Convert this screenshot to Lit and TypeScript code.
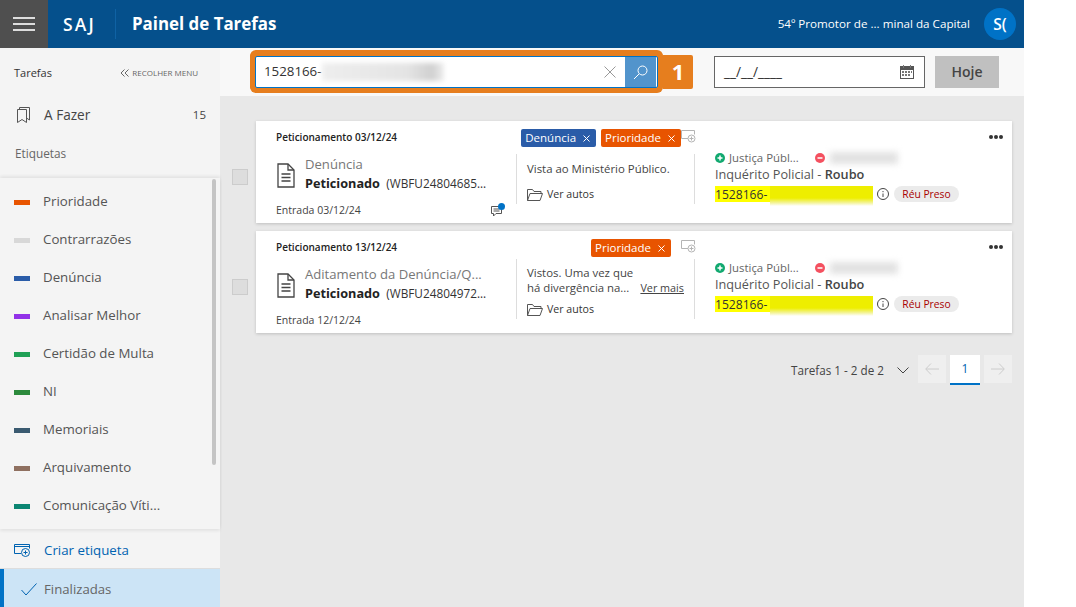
import { LitElement, html, css, svg } from 'lit';
import { customElement } from 'lit/decorators.js';

const labels = [
  ['Prioridade', '#e85400'],
  ['Contrarrazões', '#d8d8d8'],
  ['Denúncia', '#2a5ca8'],
  ['Analisar Melhor', '#9232e8'],
  ['Certidão de Multa', '#1fa055'],
  ['NI', '#2c8a3c'],
  ['Memoriais', '#3a5a70'],
  ['Arquivamento', '#8f7060'],
  ['Comunicação Víti...', '#0b8572'],
];

const tasks = [
  {
    title: 'Peticionamento 03/12/24',
    tags: [['Denúncia', '#2a5ca8'], ['Prioridade', '#e85400']],
    type: 'Denúncia',
    code: '(WBFU24804685...',
    entry: 'Entrada 03/12/24',
    note: ['Vista ao Ministério Público.'],
    comment: true,
  },
  {
    title: 'Peticionamento 13/12/24',
    tags: [['Prioridade', '#e85400']],
    type: 'Aditamento da Denúncia/Q...',
    code: '(WBFU24804972...',
    entry: 'Entrada 12/12/24',
    note: ['Vistos. Uma vez que', 'há divergência na...'],
    comment: false,
  },
];

const docIcon = svg`<svg width="18" height="25" viewBox="0 0 18 25" fill="none" stroke="#444" stroke-width="1.3"><path d="M1 1h10l6 6v17H1z"/><path d="M11 1v6h6M4.5 11h9M4.5 14.5h9M4.5 18h9"/></svg>`;
const folderIcon = svg`<svg width="16" height="13" viewBox="0 0 16 13" fill="none" stroke="#555"><path d="M.5 12.500V1.500h5l1.500 2h7v2M.5 12.500l2.500-7h12.500l-2.500 7z"/></svg>`;
const tagAddIcon = svg`<svg width="15" height="13" viewBox="0 0 15 13" fill="none" stroke="#b4b4b4"><path d="M7 8.500H.5V.5h13v4"/><circle cx="10.500" cy="8.500" r="3.500"/><path d="M8.500 8.500h4M10.500 6.500v4"/></svg>`;
const closeIcon = svg`<svg width="7" height="7" viewBox="0 0 7 7" stroke="currentColor"><path d="M.5.500l6 6M6.500.500l-6 6"/></svg>`;

@customElement('app-root')
export class AppRoot extends LitElement {
  static styles = css`
    :host {
      display: block;
      width: 1076px;
      height: 607px;
      overflow: hidden;
      background: #fff;
      font: 13px/1.2 'Open Sans', 'Noto Sans', sans-serif;
      color: #333;
    }

    .app { width: 1024px; height: 607px; display: flex; flex-direction: column; }

    /* header */
    .top { height: 48px; flex: none; background: #05508c; color: #fff; display: flex; align-items: center; }
    .burger { width: 48px; height: 48px; background: #4f4f4f; display: flex; flex-direction: column; justify-content: center; align-items: center; gap: 4px; }
    .burger i { display: block; width: 22px; height: 2px; background: #ddd; }
    .saj { margin-left: 15px; width: 52px; font-size: 17.500px; font-weight: 600; letter-spacing: 2.200px; }
    .sep { width: 1px; height: 30px; background: #0f62a4; }
    .appname { margin-left: 16px; font-size: 16.900px; font-weight: 700; }
    .who { margin-left: auto; font-size: 11.650px; }
    .avatar { width: 32px; height: 32px; border-radius: 50%; background: #0072c6; margin: 0 8px 0 14px; display: flex; align-items: center; justify-content: center; font-size: 15.500px; font-weight: 600; }

    .below { flex: 1; display: flex; min-height: 0; }

    /* sidebar */
    .side { width: 220px; flex: none; background: #f4f4f4; display: flex; flex-direction: column; }
    .side-head { height: 50px; padding: 0 22px 0 14px; display: flex; align-items: center; justify-content: space-between; }
    .side-head b { font-weight: 400; font-size: 11px; color: #333; }
    .collapse { display: flex; align-items: center; gap: 3px; font-size: 8px; color: #666; }
    .afazer { height: 34px; padding: 0 14px 0 17px; display: flex; align-items: center; font-size: 13.600px; color: #444; font-weight: 500; }
    .afazer span { margin-left: 14px; }
    .afazer em { margin-left: auto; font-style: normal; font-size: 11.500px; }
    .etq { padding: 14px 0 0 15px; height: 29px; font-size: 11.800px; color: #666; }
    .labels { position: relative; flex: 1; min-height: 0; overflow: hidden; box-shadow: 0 -2px 3px rgba(0, 0, 0, 0.07), 0 2px 3px rgba(0, 0, 0, 0.07); margin-top: 3px; margin-bottom: 2px; padding-top: 5px; }
    .label { height: 38px; padding-left: 14px; display: flex; align-items: center; gap: 13px; font-size: 13.300px; color: #555; }
    .label i { display: block; width: 16px; height: 5px; }
    .thumb { position: absolute; left: 212px; top: 1px; width: 4px; height: 286px; background: #c4c4c4; border-radius: 2px; }
    .create { height: 38px; flex: none; padding: 2px 0 0 14px; display: flex; align-items: center; gap: 14px; color: #0063b1; font-size: 13.300px; border-bottom: 1px solid #ddd; box-sizing: border-box; }
    .done { height: 38px; flex: none; box-sizing: border-box; background: #cce4f6; border-left: 4px solid #0072c6; padding: 3px 0 0 17px; display: flex; align-items: center; gap: 7px; color: #666; font-size: 13.200px; }

    /* main */
    .main { flex: 1; background: #e8e8e8; display: flex; flex-direction: column; min-width: 0; }
    .bar { height: 48px; flex: none; background: #f8f8f8; display: flex; align-items: center; padding-left: 35px; position: relative; }
    .search { width: 403px; height: 32px; box-sizing: border-box; border: 1px solid #0072c6; background: #fff; display: flex; align-items: center; position: relative; box-shadow: 0 0 0 5px #e67e1e, 0 -1px 0 5px #e67e1e; border-radius: 2px; }
    .search .num { margin-left: 8px; font-size: 13.300px; color: #333; }
    .smear { width: 122px; height: 18px; background: linear-gradient(90deg, #eee, #e4e4e4 70%, #d0d0d0 90%, #eee); filter: blur(2.500px); }
    .clear { margin-left: auto; margin-right: 9px; color: #888; display: flex; }
    .go { width: 31px; height: 30px; margin-right: 1px; background: #5294cc; display: flex; align-items: center; justify-content: center; }
    .one { width: 30px; height: 34px; margin: -1px 0 0 5px; background: #e67e1e; color: #fff; font-size: 22px; font-weight: 700; display: flex; align-items: center; justify-content: center; border-radius: 0 2px 2px 0; }
    .date { margin-left: 21px; width: 211px; height: 32px; box-sizing: border-box; border: 1px solid #666; background: #fff; display: flex; align-items: center; justify-content: space-between; padding: 0 10px 0 9px; font-size: 13.700px; color: #333; }
    .today { margin-left: 10px; width: 64px; height: 32px; background: #c0c0c0; display: flex; align-items: center; justify-content: center; font-size: 14px; font-weight: 600; color: #444; }

    .list { padding: 25px 12px 0 12px; display: flex; flex-direction: column; gap: 8px; }
    .row { display: flex; align-items: center; gap: 8px; }
    .check { width: 16px; height: 16px; flex: none; margin-top: 10px; background: #ddd; border: 1px solid #ccc; box-sizing: border-box; }
    .card { flex: 1; height: 102px; background: #fff; box-shadow: 0 1px 3px rgba(0, 0, 0, 0.18); display: flex; position: relative; }

    .c1 { width: 260px; box-sizing: border-box; padding: 9px 0 0 20px; position: relative; flex: none; }
    .title { font-size: 10px; font-weight: 600; line-height: 14px; color: #222; }
    .doc { display: flex; gap: 10px; margin-top: 11px; padding-left: 1px; height: 44px; }
    .doc svg { margin-top: 8px; flex: none; }
    .type { font-size: 13.100px; line-height: 19px; color: #777; white-space: nowrap; }
    .state { font-size: 12.700px; line-height: 19px; font-weight: 700; color: #222; white-space: nowrap; }
    .state small { font-size: 11.800px; font-weight: 400; margin-left: 3px; color: #333; }
    .entry { margin-top: 4px; font-size: 10.500px; line-height: 14px; color: #444; }
    .comment { position: absolute; left: 235px; top: 82px; }

    .c2 { width: 180px; flex: none; box-sizing: border-box; padding-top: 8px; display: flex; flex-direction: column; }
    .tags { display: flex; justify-content: flex-end; align-items: flex-start; height: 18px; margin-bottom: 4px; gap: 5px; }
    .tag { height: 18px; padding: 0 6px 0 4px; border-radius: 2px; color: #fff; display: flex; align-items: center; gap: 7px; font-size: 11.500px; }
    .tagadd { margin: 1px 0 0 -5px; display: flex; }
    .tags.spaced .tagadd { margin-left: 5px; }
    .descwrap { flex: 1; padding: 0 1px 16px 0; display: flex; align-items: center; min-height: 0; }
    .desc { flex: 1; border-left: 1px solid #ddd; border-right: 1px solid #ddd; padding: 6px 0 0 10px; font-size: 11.400px; line-height: 15px; color: #444; }
    .desc .line { display: flex; justify-content: space-between; padding-right: 10px; white-space: nowrap; }
    .desc u { font-size: 10.800px; }
    .autos { height: 20px; margin-top: 4.500px; display: flex; align-items: center; gap: 4px; font-size: 10.600px; color: #333; }
    .desc.single { padding-top: 7px; }
    .desc.single .autos { margin-top: 8px; }

    .c3 { flex: 1; padding: 30px 0 0 19px; position: relative; }
    .dots { position: absolute; right: 9px; top: 14px; display: flex; gap: 1px; }
    .dots i { display: block; width: 4px; height: 4px; border-radius: 50%; background: #333; }
    .party { display: flex; align-items: center; height: 14px; font-size: 11.400px; color: #666; }
    .party span { width: 86px; margin-left: 4px; white-space: nowrap; }
    .party .blur { width: 68px; height: 12px; margin-left: 5px; background: #e2e2e2; filter: blur(3px); }
    .kind { margin-top: 1px; line-height: 17px; font-size: 12.700px; color: #555; white-space: nowrap; }
    .kind b { font-weight: 600; color: #444; }
    .proc { margin-top: 3px; display: flex; align-items: flex-start; height: 20px; }
    .hl { width: 158px; height: 16px; display: flex; font-size: 12.100px; line-height: 17px; color: #333; }
    .hl span { background: #ffff00; width: 55px; box-sizing: border-box; }
    .hl i { display: block; flex: 1; height: 20px; background: linear-gradient(#eeee00 60%, #f4f4a0 85%, #fff); }
    .info { margin: 2px 5px 0 4px; display: flex; }
    .chip { height: 16px; width: 65px; border-radius: 8px; background: #ebebeb; color: #a80000; font-size: 10.300px; display: flex; align-items: center; justify-content: center; }

    .pager { margin-top: 22px; padding-right: 12px; display: flex; justify-content: flex-end; align-items: flex-start; height: 29px; }
    .pager .count { font-size: 11.700px; line-height: 29px; margin-top: 1px; color: #444; margin-right: 13px; }
    .pager .chev { margin: 12px 9px 0 0; display: flex; }
    .pbtn { width: 28px; height: 28px; background: #efefef; display: flex; align-items: center; justify-content: center; }
    .pnum { width: 30px; height: 27px; padding-top: 1px; box-sizing: content-box; margin: 0 4px; background: #fff; border-bottom: 2px solid #0072c6; display: flex; align-items: center; justify-content: center; font-size: 12px; color: #0063b1; }
  `;

  renderCard(t: (typeof tasks)[number]) {
    const spaced = t.tags.length === 1;
    return html`
      <div class="row">
        <div class="check"></div>
        <div class="card">
          <div class="c1">
            <div class="title">${t.title}</div>
            <div class="doc">
              ${docIcon}
              <div>
                <div class="type">${t.type}</div>
                <div class="state">Peticionado <small>${t.code}</small></div>
              </div>
            </div>
            <div class="entry">${t.entry}</div>
            ${t.comment
              ? html`<div class="comment">
                  <svg width="15" height="15" viewBox="0 0 15 15" fill="none" stroke="#555">
                    <path d="M.5 3.500h10v7H5l-2.500 2.500v-2.500h-2zM2.500 6h6M2.500 8h6" />
                    <circle cx="10.500" cy="3.500" r="3.500" fill="#0072c6" stroke="none" />
                  </svg>
                </div>`
              : ''}
          </div>
          <div class="c2">
            <div class="tags ${spaced ? 'spaced' : ''}">
              ${t.tags.map(
                ([name, color]) => html`<div class="tag" style="background:${color}">${name}${closeIcon}</div>`
              )}
              <div class="tagadd">${tagAddIcon}</div>
            </div>
            <div class="descwrap">
              <div class="desc ${t.note.length === 1 ? 'single' : ''}">
                ${t.note.length === 1
                  ? html`<div class="line">${t.note[0]}</div>`
                  : html`<div class="line">${t.note[0]}</div>
                      <div class="line">${t.note[1]} <u>Ver mais</u></div>`}
                <div class="autos">${folderIcon} Ver autos</div>
              </div>
            </div>
          </div>
          <div class="c3">
            <div class="dots"><i></i><i></i><i></i></div>
            <div class="party">
              <svg width="10" height="10" viewBox="0 0 10 10"><circle cx="5" cy="5" r="5" fill="#12a970" /><path d="M2.500 5h5M5 2.500v5" stroke="#fff" stroke-width="1.500" /></svg>
              <span>Justiça Públ...</span>
              <svg width="10" height="10" viewBox="0 0 10 10"><circle cx="5" cy="5" r="5" fill="#f4505f" /><path d="M2.500 5h5" stroke="#fff" stroke-width="1.500" /></svg>
              <div class="blur"></div>
            </div>
            <div class="kind">Inquérito Policial - <b>Roubo</b></div>
            <div class="proc">
              <div class="hl"><span>1528166-</span><i></i></div>
              <div class="info">
                <svg width="12" height="12" viewBox="0 0 12 12" fill="none" stroke="#444"><circle cx="6" cy="6" r="5.500" /><path d="M6 5.500V9M6 3v1.200" /></svg>
              </div>
              <div class="chip">Réu Preso</div>
            </div>
          </div>
        </div>
      </div>
    `;
  }

  render() {
    return html`
      <div class="app">
        <header class="top">
          <div class="burger"><i></i><i></i><i></i></div>
          <div class="saj">SAJ</div>
          <div class="sep"></div>
          <div class="appname">Painel de Tarefas</div>
          <div class="who">54º Promotor de ... minal da Capital</div>
          <div class="avatar">S(</div>
        </header>
        <div class="below">
          <nav class="side">
            <div class="side-head">
              <b>Tarefas</b>
              <div class="collapse">
                <svg width="9" height="8" viewBox="0 0 9 8" fill="none" stroke="#666"><path d="M4.500.500L1 4l3.500 3.500M8.500.500L5 4l3.500 3.500" /></svg>
                RECOLHER MENU
              </div>
            </div>
            <div class="afazer">
              <svg width="13" height="16" viewBox="0 0 13 16" fill="none" stroke="#555"><path d="M.5 2.500h9v13l-4.500-3-4.500 3zM2.500 2.500v-2h10v12.500l-3-2" /></svg>
              <span>A Fazer</span>
              <em>15</em>
            </div>
            <div class="etq">Etiquetas</div>
            <div class="labels">
              <div class="thumb"></div>
              ${labels.map(([name, color]) => html`<div class="label"><i style="background:${color}"></i>${name}</div>`)}
            </div>
            <div class="create">
              <svg width="16" height="13" viewBox="0 0 16 13" fill="none" stroke="#0063b1"><path d="M7 9.500H.5V.5h15v4M.5 2.500h15" /><circle cx="11.500" cy="8.500" r="4" /><path d="M9.500 8.500h4M11.500 6.500v4" /></svg>
              Criar etiqueta
            </div>
            <div class="done">
              <svg width="16" height="13" viewBox="0 0 16 13" fill="none" stroke="#0063b1"><path d="M.5 7l4.500 5L15.500 .5" /></svg>
              Finalizadas
            </div>
          </nav>
          <main class="main">
            <div class="bar">
              <div class="search">
                <span class="num">1528166-</span>
                <div class="smear"></div>
                <div class="clear">
                  <svg width="12" height="12" viewBox="0 0 12 12" stroke="#999"><path d="M.5.500l11 11M11.500.500l-11 11" /></svg>
                </div>
                <div class="go">
                  <svg width="15" height="15" viewBox="0 0 15 15" fill="none" stroke="#fff"><circle cx="9.500" cy="5.500" r="4.500" /><path d="M6 9L1 14" /></svg>
                </div>
              </div>
              <div class="one">1</div>
              <div class="date">
                <span>__/__/____</span>
                <svg width="14" height="14" viewBox="0 0 14 14"><path d="M0 1h14v13H0z" fill="#555" /><path d="M1 5h12v8H1z" fill="#fff" /><path d="M3 0h1v3H3zM10 0h1v3h-1zM2 6h2v2H2zM5 6h2v2H5zM8 6h2v2H8zM11 6h1v2h-1zM2 9h2v2H2zM5 9h2v2H5zM8 9h2v2H8z" fill="#777" /></svg>
              </div>
              <div class="today">Hoje</div>
            </div>
            <div class="list">${tasks.map((t) => this.renderCard(t))}</div>
            <div class="pager">
              <span class="count">Tarefas 1 - 2 de 2</span>
              <span class="chev"><svg width="12" height="7" viewBox="0 0 12 7" fill="none" stroke="#444"><path d="M.5 .5L6 6l5.500-5.500" /></svg></span>
              <div class="pbtn"><svg width="14" height="12" viewBox="0 0 14 12" fill="none" stroke="#ccc"><path d="M14 6H1M6 .5L.7 6 6 11.500" /></svg></div>
              <div class="pnum">1</div>
              <div class="pbtn"><svg width="14" height="12" viewBox="0 0 14 12" fill="none" stroke="#ccc"><path d="M0 6h13M8 .5L13.300 6 8 11.500" /></svg></div>
            </div>
          </main>
        </div>
      </div>
    `;
  }
}
